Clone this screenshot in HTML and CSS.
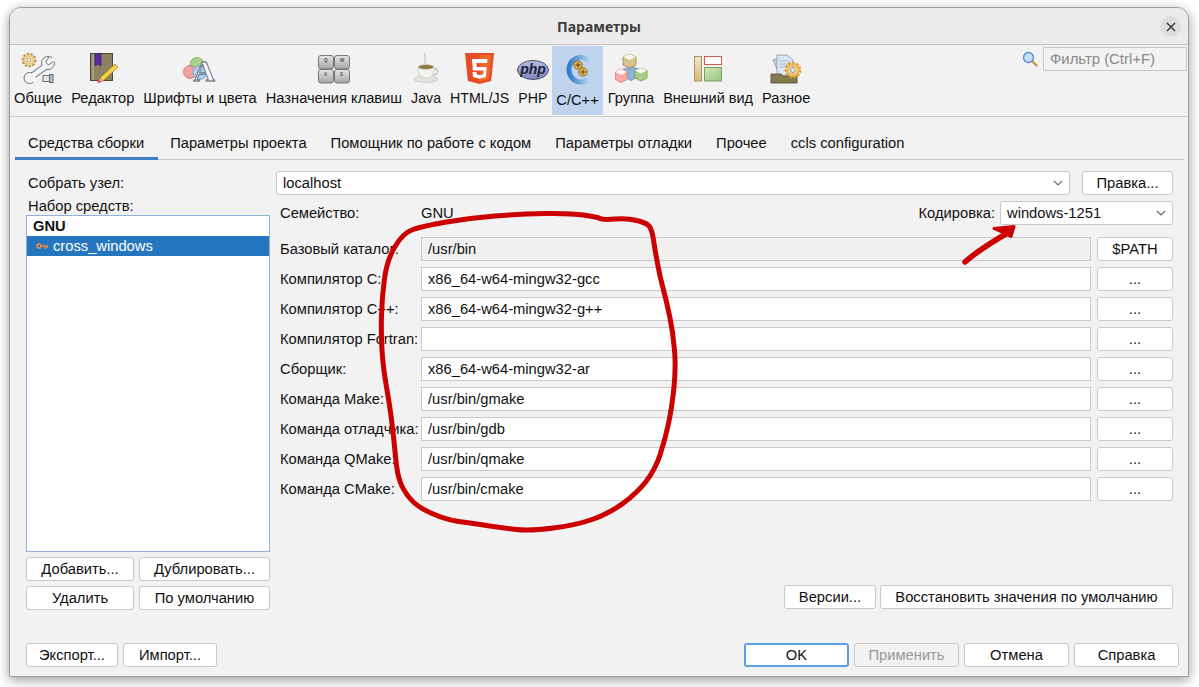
FILE: index.html
```html
<!DOCTYPE html>
<html lang="ru">
<head>
<meta charset="UTF-8">
<meta name="viewport" content="width=device-width, initial-scale=1.0">
<title>Параметры</title>
<link rel="stylesheet" href="styles.css">
</head>
<body>
  <div class="window">
    <div class="titlebar">
      <span class="title">Параметры</span>
      <span class="close">
        <svg width="10" height="10" viewBox="0 0 10 10"><path d="M1 1l8 8M9 1l-8 8" stroke="#333" stroke-width="1.4" fill="none"/></svg>
      </span>
    </div>

    <div class="toolbar">
      <div class="tool">
        <svg class="icon" viewBox="0 0 32 32">
          <circle cx="7" cy="8" r="5.800" fill="none" stroke="#c08f3e" stroke-width="3" stroke-dasharray="2.300 1.200"/>
          <circle cx="7" cy="8" r="4.200" fill="none" stroke="#eccb87" stroke-width="2.600"/>
          <circle cx="7" cy="8" r="1.900" fill="#f7f2e4" stroke="#a47c38" stroke-width=".7"/>
          <path d="M9 25L24 14" stroke="#6d7378" stroke-width="7" stroke-linecap="round"/>
          <circle cx="26" cy="11" r="6.500" fill="#f4f5f6" stroke="#6d7378"/>
          <circle cx="7.500" cy="26" r="5.500" fill="#f4f5f6" stroke="#6d7378"/>
          <path d="M9 25L24 14" stroke="#f4f5f6" stroke-width="5" stroke-linecap="round"/>
          <path d="M33 3L26 11l3 3 5-6z" fill="#f2f2f2"/>
          <path d="M27 5l-3.500 5 3 3 5-3.500" fill="#f2f2f2" stroke="#6d7378"/>
          <path d="M13 32L7.500 26l3-3 5 4z" fill="#f2f2f2"/>
          <rect x="21" y="23.500" width="6.500" height="6" fill="#e4e7ea" stroke="#6d7378"/>
          <rect x="27.500" y="22.500" width="3.500" height="8" fill="#a9c0cf" stroke="#5d6d78"/>
        </svg>
        <span>Общие</span>
      </div>
      <div class="tool">
        <svg class="icon" viewBox="0 0 32 32">
          <rect x="3.500" y="1.500" width="22" height="27" fill="#8c8160" stroke="#4e4730"/>
          <rect x="5" y="2" width="2" height="26" fill="#a99e7c"/>
          <path d="M8 2h6v12l-3-2-3 2z" fill="#5b2aa5" stroke="#2f1866" stroke-width=".7"/>
          <path d="M28 12l3 3-15 14-3-3z" fill="#f5d44a" stroke="#a9851c" stroke-width=".8"/>
          <path d="M13 26l3 3-4.500 1.500z" fill="#f0c8a0" stroke="#c46b5c" stroke-width=".8"/>
          <circle cx="12" cy="29.500" r="1.600" fill="#e0566a"/>
        </svg>
        <span>Редактор</span>
      </div>
      <div class="tool">
        <svg class="icon" viewBox="0 0 32 32">
          <circle cx="13" cy="12.500" r="7" fill="#a6d48d" stroke="#73a05c" stroke-width=".7"/>
          <circle cx="6" cy="20" r="6.500" fill="#f2a0a0" stroke="#b76565" stroke-width=".7"/>
          <circle cx="16" cy="20.500" r="7" fill="#a8cfee" stroke="#6f95b5" stroke-width=".7"/>
          <text class="icon-a" x="20" y="29" text-anchor="middle">A</text>
        </svg>
        <span>Шрифты и цвета</span>
      </div>
      <div class="tool">
        <svg class="icon" viewBox="0 0 32 32">
          <defs>
            <linearGradient id="keyFill" x1="0" y1="0" x2="0" y2="1">
              <stop offset="0" stop-color="#e6e6e6"/>
              <stop offset="1" stop-color="#a4a4a4"/>
            </linearGradient>
          </defs>
          <rect x=".5" y="3.500" width="15" height="13.500" rx="2.500" fill="url(#keyFill)" stroke="#777"/>
          <rect x="16.500" y="3.500" width="15" height="13.500" rx="2.500" fill="url(#keyFill)" stroke="#777"/>
          <rect x=".5" y="17.500" width="15" height="13.500" rx="2.500" fill="url(#keyFill)" stroke="#777"/>
          <rect x="16.500" y="17.500" width="15" height="13.500" rx="2.500" fill="url(#keyFill)" stroke="#777"/>
          <text class="icon-key" x="6" y="9.500">Q</text>
          <text class="icon-key" x="22" y="9.500">W</text>
          <text class="icon-key" x="6" y="23.500">A</text>
          <text class="icon-key" x="22" y="23.500">S</text>
        </svg>
        <span>Назначения клавиш</span>
      </div>
      <div class="tool tool-latin">
        <svg class="icon" viewBox="0 0 32 32">
          <path d="M15 1c-2 3 2 4 0 7s1 3 0 4" fill="none" stroke="#c9c9c9" stroke-width="1.500"/>
          <ellipse cx="16" cy="27" rx="12" ry="3.500" fill="#e2e2e0" stroke="#bdbdb8" stroke-width=".6"/>
          <path d="M24 17c5-1 5 5-1 6" fill="none" stroke="#c8c8c0" stroke-width="1.600"/>
          <path d="M8 15c0 8 3 11 8 11s8-3 8-11z" fill="#f4f3ee" stroke="#c4c3bb" stroke-width=".6"/>
          <ellipse cx="16" cy="15" rx="8" ry="2.400" fill="#8b7a3c" stroke="#d8d7cf" stroke-width=".8"/>
        </svg>
        <span>Java</span>
      </div>
      <div class="tool tool-latin">
        <svg class="icon" viewBox="0 0 32 32">
          <path d="M1 1h29l-2.800 28L15.500 32 3.800 29z" fill="#e44d26"/>
          <path d="M15.500 3v26.500l9.500-2.600L27.400 3z" fill="#f16529"/>
          <path d="M8 7h15.500l-.4 4H12.400l.3 4h10l-.8 10-6.400 1.800L9 25l-.4-5h3.900l.2 2.300 3.300.9 3.300-.9.4-3.800H8.900z" fill="#fff"/>
        </svg>
        <span>HTML/JS</span>
      </div>
      <div class="tool tool-latin">
        <svg class="icon" viewBox="0 0 32 32">
          <defs>
            <linearGradient id="phpFill" x1="0" y1="0" x2="0" y2="1">
              <stop offset="0" stop-color="#b6bde0"/>
              <stop offset="1" stop-color="#7f88bb"/>
            </linearGradient>
          </defs>
          <ellipse cx="16" cy="18" rx="15.500" ry="9.500" fill="url(#phpFill)" stroke="#3f4466" stroke-width=".9"/>
          <text class="icon-php" x="16" y="22" text-anchor="middle">php</text>
        </svg>
        <span>PHP</span>
      </div>
      <div class="tool tool-selected">
        <svg class="icon" viewBox="0 0 32 32">
          <defs>
            <linearGradient id="cFill" x1="0" y1="0" x2="1" y2="0">
              <stop offset="0" stop-color="#2e7cc6"/>
              <stop offset="1" stop-color="#b9d9f0"/>
            </linearGradient>
          </defs>
          <path d="M27 10C25 6 21 5 17.500 5.500 11 6.500 7 11.500 7 17.500s4.500 12 11 12.500c4 .3 8-1.500 10-4.500" fill="none" stroke="url(#cFill)" stroke-width="5"/>
          <circle cx="16" cy="13" r="4.300" fill="#e2ad4b" stroke="#6e5822" stroke-width=".7"/>
          <circle cx="21" cy="20" r="4.300" fill="#e2ad4b" stroke="#6e5822" stroke-width=".7"/>
          <path d="M13.500 13h5M16 10.500v5M18.500 20h5M21 17.500v5" stroke="#3b2d0c" stroke-width=".8"/>
        </svg>
        <span>C/C++</span>
      </div>
      <div class="tool">
        <svg class="icon" viewBox="0 0 32 32">
          <path d="M16 14l8 3.500v7l-8 4-8-4v-7z" fill="#8fb2d3" stroke="#6a8cad" stroke-width=".7"/>
          <path d="M14.500 2l6.500 3v8l-6.500 3-6.500-3V5z" fill="#d8c48f" stroke="#9b8554" stroke-width=".8"/>
          <path d="M14.500 2l6.500 3-6.500 3L8 5z" fill="#fbf6e8"/>
          <path d="M6 17l6 3v7.500l-6 3-5.500-3V20z" fill="#f7a9a9" stroke="#d07a7a" stroke-width=".8"/>
          <path d="M6 17l6 3-6 3-5.500-3z" fill="#fff2f2"/>
          <path d="M26 16l6 2.500v7.500l-6 3-6-3v-7.500z" fill="#a5cf85" stroke="#6d9a4f" stroke-width=".8"/>
          <path d="M26 16l6 2.500-6 3-6-3z" fill="#f5fbef"/>
        </svg>
        <span>Группа</span>
      </div>
      <div class="tool tool-narrow">
        <svg class="icon" viewBox="0 0 32 32">
          <defs>
            <linearGradient id="panelTan" x1="0" y1="0" x2="0" y2="1">
              <stop offset="0" stop-color="#f3e8d2"/>
              <stop offset="1" stop-color="#d3b57f"/>
            </linearGradient>
            <linearGradient id="panelGreen" x1="0" y1="0" x2="1" y2="1">
              <stop offset="0" stop-color="#cfe5ba"/>
              <stop offset="1" stop-color="#9cc77c"/>
            </linearGradient>
          </defs>
          <rect x="2.500" y="4.500" width="7" height="24.500" fill="url(#panelTan)" stroke="#b2935d"/>
          <rect x="12.500" y="4.500" width="17" height="8" fill="#fff" stroke="#cc5a50"/>
          <rect x="12.500" y="15.500" width="17" height="13.500" fill="url(#panelGreen)" stroke="#7ba05e"/>
        </svg>
        <span>Внешний вид</span>
      </div>
      <div class="tool">
        <svg class="icon" viewBox="0 0 32 32">
          <path d="M3 8l8-3 6 14-8 3z" fill="#c3d0de" stroke="#7f8fa0" stroke-width=".7"/>
          <path d="M7 3h10l6 5v16H7z" fill="#dbe5f0" stroke="#7f8fa0" stroke-width=".7"/>
          <path d="M9.500 9h10M9.500 12h10M9.500 15h10" stroke="#9fb0c2" stroke-width=".8"/>
          <path d="M1 22h10l2 2h14v7H1z" fill="#85794f" stroke="#4e4730" stroke-width=".8"/>
          <circle cx="23" cy="18" r="6.800" fill="none" stroke="#d99a2c" stroke-width="3" stroke-dasharray="2.400 1.500"/>
          <circle cx="23" cy="18" r="5.300" fill="none" stroke="#f0bb55" stroke-width="3"/>
          <circle cx="23" cy="18" r="2.500" fill="#dce6ef" stroke="#a67420" stroke-width=".7"/>
        </svg>
        <span>Разное</span>
      </div>

      <div class="filter">
        <svg class="filter-icon" width="16" height="16" viewBox="0 0 16 16">
          <path d="M10 10l4.500 4.500" stroke="#c9962e" stroke-width="2.400" stroke-linecap="round"/>
          <circle cx="6.500" cy="6.500" r="5" fill="#c7e1fa" stroke="#4f8fd6" stroke-width="1.300"/>
        </svg>
        <div class="filter-box">Фильтр (Ctrl+F)</div>
      </div>
    </div>

    <div class="tabs">
      <div class="tab tab-active">Средства сборки</div>
      <div class="tab">Параметры проекта</div>
      <div class="tab">Помощник по работе с кодом</div>
      <div class="tab">Параметры отладки</div>
      <div class="tab">Прочее</div>
      <div class="tab">ccls configuration</div>
    </div>

    <div class="content">
      <div class="left">
        <div class="left-label left-label-first">Собрать узел:</div>
        <div class="left-label">Набор средств:</div>
        <div class="list">
          <div class="list-head">GNU</div>
          <div class="list-item">
            <svg width="12" height="6" viewBox="0 0 12 6"><circle cx="3" cy="3" r="2" fill="none" stroke="#f08a3c" stroke-width="1.500"/><path d="M5 3h7M9 3v3M11.300 3v2" stroke="#f08a3c" stroke-width="1.300" fill="none"/></svg>
            <span>cross_windows</span>
          </div>
        </div>
        <div class="left-buttons">
          <div class="btn">Добавить...</div>
          <div class="btn">Дублировать...</div>
          <div class="btn">Удалить</div>
          <div class="btn">По умолчанию</div>
        </div>
      </div>

      <div class="right">
        <div class="host-row">
          <div class="combo combo-host">
            <span>localhost</span>
            <svg class="chevron" width="10" height="6" viewBox="0 0 10 6"><path d="M1 1l4 4 4-4" fill="none" stroke="#666" stroke-width="1.100"/></svg>
          </div>
          <div class="btn btn-edit">Правка...</div>
        </div>

        <div class="family-row">
          <span class="family-label">Семейство:</span>
          <span class="family-value">GNU</span>
          <span class="enc-label">Кодировка:</span>
          <div class="combo combo-enc">
            <span>windows-1251</span>
            <svg class="chevron" width="10" height="6" viewBox="0 0 10 6"><path d="M1 1l4 4 4-4" fill="none" stroke="#666" stroke-width="1.100"/></svg>
          </div>
        </div>

        <div class="fields">
          <span class="field-label">Базовый каталог:</span>
          <div class="input input-off">/usr/bin</div>
          <div class="btn">$PATH</div>

          <span class="field-label">Компилятор C:</span>
          <div class="input">x86_64-w64-mingw32-gcc</div>
          <div class="btn">...</div>

          <span class="field-label">Компилятор C++:</span>
          <div class="input">x86_64-w64-mingw32-g++</div>
          <div class="btn">...</div>

          <span class="field-label">Компилятор Fortran:</span>
          <div class="input"></div>
          <div class="btn">...</div>

          <span class="field-label">Сборщик:</span>
          <div class="input">x86_64-w64-mingw32-ar</div>
          <div class="btn">...</div>

          <span class="field-label">Команда Make:</span>
          <div class="input">/usr/bin/gmake</div>
          <div class="btn">...</div>

          <span class="field-label">Команда отладчика:</span>
          <div class="input">/usr/bin/gdb</div>
          <div class="btn">...</div>

          <span class="field-label">Команда QMake:</span>
          <div class="input">/usr/bin/qmake</div>
          <div class="btn">...</div>

          <span class="field-label">Команда CMake:</span>
          <div class="input">/usr/bin/cmake</div>
          <div class="btn">...</div>
        </div>

        <div class="right-buttons">
          <div class="btn btn-versions">Версии...</div>
          <div class="btn btn-restore">Восстановить значения по умолчанию</div>
        </div>
      </div>
    </div>

    <div class="footer">
      <div class="btn btn-export">Экспорт...</div>
      <div class="btn btn-import">Импорт...</div>
      <div class="footer-gap"></div>
      <div class="btn btn-action btn-ok">OK</div>
      <div class="btn btn-action btn-off">Применить</div>
      <div class="btn btn-action">Отмена</div>
      <div class="btn btn-action">Справка</div>
    </div>
  </div>

  <!-- hand drawn red marks on top of the dialog -->
  <svg class="marks" width="1199" height="687" viewBox="0 0 1199 687">
    <path d="M600 218.500Q603 220 615 219Q627 218 637 220.500Q647 223 649.500 226.500Q652 230 653.500 240Q655 250 657.500 263.500Q660 277 663.500 290Q667 303 670 318Q673 333 674.500 350Q676 367 674 387Q672 407 668.500 423.500Q665 440 660 455Q655 470 646 481.500Q637 493 623.500 503Q610 513 593.500 519Q577 525 553.500 528Q530 531 516.500 529.500Q503 528 486.500 525.500Q470 523 458.500 521.500Q447 520 432 513.500Q417 507 410 498.500Q403 490 400 481.500Q397 473 395.500 456.500Q394 440 392 423.500Q390 407 386.500 387Q383 367 382 350Q381 333 381.500 315Q382 297 384.500 278.500Q387 260 395 246.500Q403 233 413 229.500Q423 226 446.500 222Q470 218 495 216Q520 214 545 213.500Q570 213 583.500 215Q597 217 600 218.500Z" fill="none" stroke="#cc0000" stroke-width="5" stroke-linejoin="round"/>
    <path d="M965 262C975 253 990 243 1011 231" fill="none" stroke="#cc0000" stroke-width="5.500" stroke-linecap="round"/>
    <path d="M994 228.500L1014 226.500L1011 236.500L1004 233z" fill="#cc0000" stroke="#cc0000" stroke-width="3" stroke-linejoin="round"/>
  </svg>
</body>
</html>
```

FILE: styles.css
```css
* {
  box-sizing: border-box;
}
body {
  margin: 0;
  height: 687px;
  overflow: hidden;
  background-color: #ffffff;
  font-family: "Liberation Sans", Arial, sans-serif;
  font-size: 14.72px;
  color: #111;
}
.window {
  display: flex;
  flex-direction: column;
  width: 1180px;
  height: 670px;
  margin: 7px 0 0 9px;
  background-color: #f2f2f2;
  border: 1px solid #9c9c9c;
  border-radius: 12px 12px 0 0;
  box-shadow: 0 3px 12px rgba(0, 0, 0, 0.4);
}

/* title bar */
.titlebar {
  display: flex;
  justify-content: center;
  align-items: center;
  position: relative;
  height: 37px;
  flex: none;
  background-color: #ebebeb;
  border-bottom: 1px solid #c4c4c4;
  border-radius: 11px 11px 0 0;
}
.title {
  font-family: "Noto Sans", "Open Sans", sans-serif;
  font-size: 14px;
  font-weight: 700;
  color: #3d3d3d;
}
.close {
  display: flex;
  justify-content: center;
  align-items: center;
  position: absolute;
  top: 8px;
  right: 7px;
  width: 21px;
  height: 21px;
  border-radius: 50%;
  background-color: #dedede;
}

/* big icon toolbar */
.toolbar {
  display: flex;
  gap: 1px;
  position: relative;
  height: 72px;
  flex: none;
  padding: 1px 0 0 0;
  border-bottom: 1px solid #cfcfcf;
  font-size: 14.67px;
}
.tool {
  display: flex;
  flex-direction: column;
  align-items: center;
  height: 69px;
  padding: 6px 4px 0;
}
.tool span {
  margin-top: 6px;
  white-space: nowrap;
  line-height: 17px;
}
.tool-latin {
  font-size: 14.2px;
}
.tool-narrow {
  font-size: 14.5px;
}
.tool-selected {
  background-color: #bfd3ee;
}
.tool-selected span {
  margin-top: 8px;
}
.icon {
  display: block;
  width: 32px;
  height: 32px;
  flex: none;
  margin: 0 -6px;
  overflow: visible;
}
.icon-a {
  font-family: "Liberation Serif", serif;
  font-size: 30px;
  font-weight: 700;
  fill: #f4f7fa;
  stroke: #55606b;
  stroke-width: 0.8px;
}
.icon-key {
  font-family: "Liberation Sans", sans-serif;
  font-size: 4.5px;
  font-weight: 700;
  fill: #555;
}
.icon-php {
  font-family: "Liberation Sans", sans-serif;
  font-size: 14px;
  font-weight: 700;
  font-style: italic;
  fill: #20233b;
}
.filter {
  display: flex;
  align-items: center;
  gap: 5px;
  margin-left: auto;
  height: 24px;
  margin-top: 1px;
  padding-right: 1px;
  font-size: 14.9px;
}
.filter-box {
  display: flex;
  align-items: center;
  width: 144px;
  height: 24px;
  padding-left: 6px;
  background-color: #f2f2f2;
  border: 1px solid #c9c9c9;
  color: #8a8a8a;
}

/* tabs */
.tabs {
  display: flex;
  height: 43px;
  flex: none;
  margin: 0 4px 0 5px;
  border-bottom: 1px solid #c9c9c9;
}
.tab {
  display: flex;
  align-items: center;
  height: 43px;
  padding: 9px 12px 0;
  white-space: nowrap;
}
.tab-active {
  padding: 11px 14px 0 13px;
  border-bottom: 3px solid #3d7fc1;
}

/* main area */
.content {
  display: flex;
  gap: 6px;
  height: 450px;
  flex: none;
  padding: 11px 15px 0 16px;
}
.left {
  display: flex;
  flex-direction: column;
  width: 244px;
  flex: none;
}
.left-label {
  height: 18px;
  padding-left: 2px;
  line-height: 18px;
  margin-top: 2px;
}
.left-label-first {
  height: 24px;
  line-height: 24px;
  margin-top: 0;
}
.list {
  height: 337px;
  flex: none;
  margin-top: 0;
  background-color: #fff;
  border: 1px solid #8fb2dc;
}
.list-head {
  height: 20px;
  padding-left: 6px;
  font-weight: 700;
  line-height: 20px;
}
.list-item {
  display: flex;
  align-items: center;
  gap: 5px;
  height: 20px;
  padding-left: 9px;
  background-color: #2675bf;
  color: #fff;
}
.left-buttons {
  display: grid;
  grid-template-columns: 108px 131px;
  gap: 5px;
  margin-top: 5px;
}
.right {
  display: flex;
  flex-direction: column;
  flex: 1;
  min-width: 0;
}
.host-row {
  display: flex;
  gap: 12px;
}
.combo {
  display: flex;
  justify-content: space-between;
  align-items: center;
  height: 24px;
  padding: 0 6px 0 6px;
  background-color: #fff;
  border: 1px solid #c9c9c9;
  border-radius: 3px;
}
.combo-host {
  flex: 1;
}
.btn-edit {
  width: 91px;
}
.chevron {
  flex: none;
}
.family-row {
  display: flex;
  align-items: center;
  height: 24px;
  margin-top: 6px;
  padding-left: 4px;
}
.family-label {
  width: 141px;
}
.family-value {
  flex: 1;
}
.enc-label {
  margin-right: 5px;
}
.combo-enc {
  width: 173px;
}
.fields {
  display: grid;
  grid-template-columns: 140px 1fr 76px;
  column-gap: 7px;
  row-gap: 6px;
  margin-top: 12px;
  padding-left: 4px;
}
.fields .field-label {
  margin-right: -7px;
  line-height: 24px;
  white-space: nowrap;
}
.fields .input {
  margin-left: -6px;
  margin-right: -1px;
}
.input {
  height: 24px;
  padding-left: 6px;
  line-height: 22px;
  background-color: #fff;
  border: 1px solid #c9c9c9;
}
.input-off {
  background-color: #f0f0f0;
}
.right-buttons {
  display: flex;
  justify-content: flex-end;
  gap: 4px;
  margin-top: auto;
  margin-bottom: 1px;
}
.btn-versions {
  width: 92px;
}
.btn-restore {
  width: 293px;
}

/* buttons */
.btn {
  display: flex;
  justify-content: center;
  align-items: center;
  height: 24px;
  background-color: #fff;
  border: 1px solid #c9c9c9;
  border-radius: 3px;
  white-space: nowrap;
}

/* bottom row */
.footer {
  display: flex;
  gap: 5px;
  margin-top: auto;
  padding: 0 9px 9px 16px;
}
.footer-gap {
  flex: 1;
}
.btn-export {
  width: 92px;
}
.btn-import {
  width: 94px;
}
.btn-action {
  width: 105px;
}
.btn-ok {
  border: 2px solid #5b9fe3;
}
.btn-off {
  background-color: #f2f2f2;
  color: #999;
}

.marks {
  position: absolute;
  top: 0;
  left: 0;
  pointer-events: none;
}
```
